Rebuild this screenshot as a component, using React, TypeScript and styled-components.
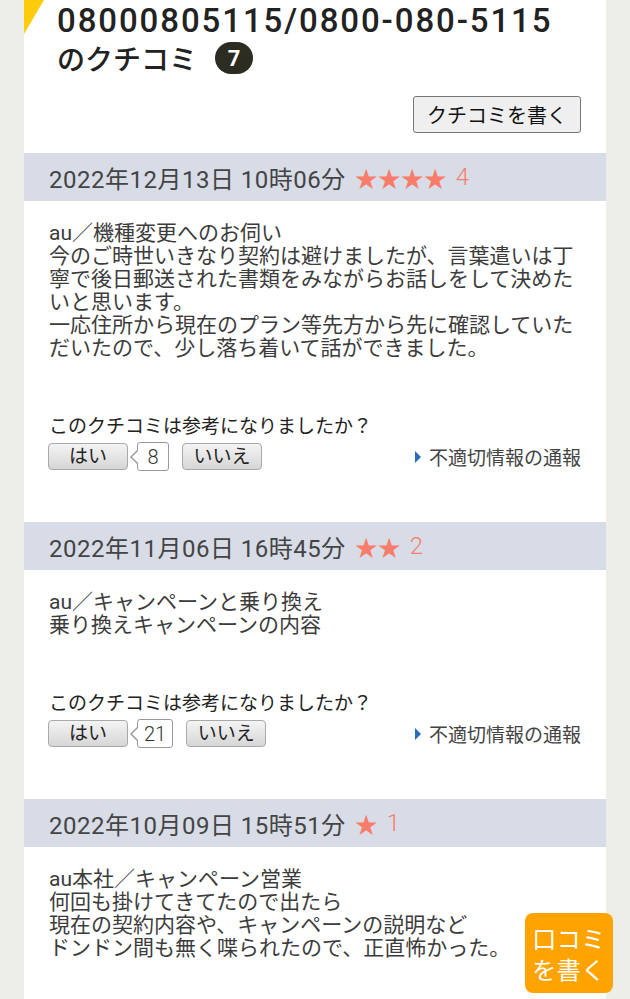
import React from "react";
import styled, { createGlobalStyle } from "styled-components";

type Review = {
  id: number;
  date: string;
  rating: number;
  text: string;
  yes: number;
};

const reviews: Review[] = [
  {
    id: 1,
    date: "2022年12月13日 10時06分",
    rating: 4,
    text:
      "au／機種変更へのお伺い\n今のご時世いきなり契約は避けましたが、言葉遣いは丁寧で後日郵送された書類をみながらお話しをして決めたいと思います。\n一応住所から現在のプラン等先方から先に確認していただいたので、少し落ち着いて話ができました。",
    yes: 8,
  },
  {
    id: 2,
    date: "2022年11月06日 16時45分",
    rating: 2,
    text: "au／キャンペーンと乗り換え\n乗り換えキャンペーンの内容",
    yes: 21,
  },
  {
    id: 3,
    date: "2022年10月09日 15時51分",
    rating: 1,
    text:
      "au本社／キャンペーン営業\n何回も掛けてきてたので出たら\n現在の契約内容や、キャンペーンの説明など\nドンドン間も無く喋られたので、正直怖かった。",
    yes: 14,
  },
];

const GlobalStyle = createGlobalStyle`
  html, body {
    margin: 0;
    padding: 0;
    background: #eeeee8;
  }
  body {
    font-family: Roboto, "Noto Sans CJK JP", sans-serif;
    color: #333;
  }
`;

const Column = styled.main`
  position: relative;
  width: 582px;
  margin: 0 24px;
  min-height: 100vh;
  background: #fff;

  &::before {
    content: "";
    position: absolute;
    left: 0;
    top: 0;
    width: 20px;
    height: 34px;
    background: #fccb0c;
    clip-path: polygon(0 0, 100% 0, 0 100%);
  }
`;

const Title = styled.h1`
  margin: 0;
  padding: 2px 0 0 33px;
  font-weight: 500;
  color: #222;
`;

const Number = styled.div`
  font-size: 33px;
  line-height: 38px;
  letter-spacing: 1.9px;
  white-space: nowrap;
`;

const TitleSub = styled.div`
  display: flex;
  align-items: center;
  height: 36px;
  font-size: 28px;
`;

const CountBadge = styled.span`
  display: inline-flex;
  align-items: center;
  justify-content: center;
  width: 38px;
  height: 32px;
  margin-left: 18px;
  border-radius: 16px;
  background: #2c2c21;
  color: #fff;
  font-size: 22px;
  font-weight: 700;
`;

const WriteRow = styled.div`
  display: flex;
  justify-content: flex-end;
  padding: 20px 25px 20px 0;
`;

const WriteButton = styled.button`
  height: 37px;
  padding: 0 13px;
  border: 1px solid #767676;
  border-radius: 3px;
  background: #efefef;
  color: #111;
  font-family: Roboto, "Noto Sans CJK JP", sans-serif;
  font-size: 20px;
`;

const Section = styled.section`
  padding-bottom: 51px;
`;

const DateBar = styled.div`
  display: flex;
  align-items: center;
  height: 48px;
  padding-left: 25px;
  background: #d8dce6;
  color: #444;
  font-size: 24px;
  letter-spacing: 0.5px;
  white-space: nowrap;
`;

const Stars = styled.span`
  margin-left: 9px;
  color: #f87c6b;
  font-family: "Noto Sans CJK JP", sans-serif;
  font-size: 23px;
  letter-spacing: 0;
`;

const Score = styled.span`
  margin-left: 9px;
  color: #f87c6b;
  font-weight: 300;
`;

const Body = styled.p`
  margin: 0;
  padding: 21px 25px 0;
  font-size: 21px;
  line-height: 23px;
  color: #3c3c3c;
  white-space: pre-line;
`;

const Question = styled.div`
  margin-top: 55px;
  padding-left: 25px;
  font-size: 19px;
  line-height: 23px;
  color: #222;
`;

const VoteRow = styled.div`
  display: flex;
  align-items: center;
  justify-content: space-between;
  margin-top: 4px;
  padding: 0 25px 0 24px;
`;

const VoteGroup = styled.div`
  display: flex;
  align-items: center;
`;

const VoteButton = styled.button`
  width: 80px;
  height: 27px;
  padding: 0;
  border: 1px solid #a9a9a9;
  border-radius: 4px;
  background: linear-gradient(#f4f4f4, #d6d6d6);
  color: #222;
  font-family: Roboto, "Noto Sans CJK JP", sans-serif;
  font-size: 19px;
  line-height: 25px;
`;

const Tally = styled.span`
  position: relative;
  display: inline-flex;
  align-items: center;
  justify-content: center;
  box-sizing: border-box;
  min-width: 32px;
  height: 29px;
  margin: 0 13px 0 9px;
  padding: 0 6px;
  border: 1px solid #9a9a9a;
  border-radius: 3px;
  background: #fff;
  color: #333;
  font-size: 20px;
  font-weight: 300;

  &::before,
  &::after {
    content: "";
    position: absolute;
    top: 50%;
    border-style: solid;
    border-color: transparent;
    transform: translateY(-50%);
  }
  &::before {
    left: -8px;
    border-width: 8px 8px 8px 0;
    border-right-color: #9a9a9a;
  }
  &::after {
    left: -6px;
    border-width: 7px 7px 7px 0;
    border-right-color: #fff;
  }
`;

const Report = styled.a`
  display: flex;
  align-items: center;
  gap: 8px;
  color: #444;
  font-size: 19px;
  text-decoration: none;

  &::before {
    content: "";
    border-style: solid;
    border-width: 6px 0 6px 6px;
    border-color: transparent transparent transparent #2a6cb8;
  }
`;

const FloatingWrite = styled.button`
  position: fixed;
  right: 17px;
  bottom: 6px;
  width: 88px;
  height: 80px;
  padding: 0;
  border: none;
  border-radius: 8px;
  background: #ffa300;
  color: #fff;
  font-family: "Noto Sans CJK JP", sans-serif;
  font-size: 24px;
  line-height: 31px;
  letter-spacing: 0.5px;
`;

const ReviewItem = ({ date, rating, text, yes }: Review) => (
  <Section>
    <DateBar>
      {date}
      <Stars>{"★".repeat(rating)}</Stars>
      <Score>{rating}</Score>
    </DateBar>
    <Body>{text}</Body>
    <Question>このクチコミは参考になりましたか？</Question>
    <VoteRow>
      <VoteGroup>
        <VoteButton>はい</VoteButton>
        <Tally>{yes}</Tally>
        <VoteButton>いいえ</VoteButton>
      </VoteGroup>
      <Report href="#">不適切情報の通報</Report>
    </VoteRow>
  </Section>
);

const App = () => {
  return (
    <>
      <GlobalStyle />
      <Column>
        <Title>
          <Number>08000805115/0800-080-5115</Number>
          <TitleSub>
            のクチコミ
            <CountBadge>7</CountBadge>
          </TitleSub>
        </Title>
        <WriteRow>
          <WriteButton>クチコミを書く</WriteButton>
        </WriteRow>
        {reviews.map((r) => (
          <ReviewItem key={r.id} {...r} />
        ))}
      </Column>
      <FloatingWrite>
        口コミ
        <br />
        を書く
      </FloatingWrite>
    </>
  );
};

export default App;
